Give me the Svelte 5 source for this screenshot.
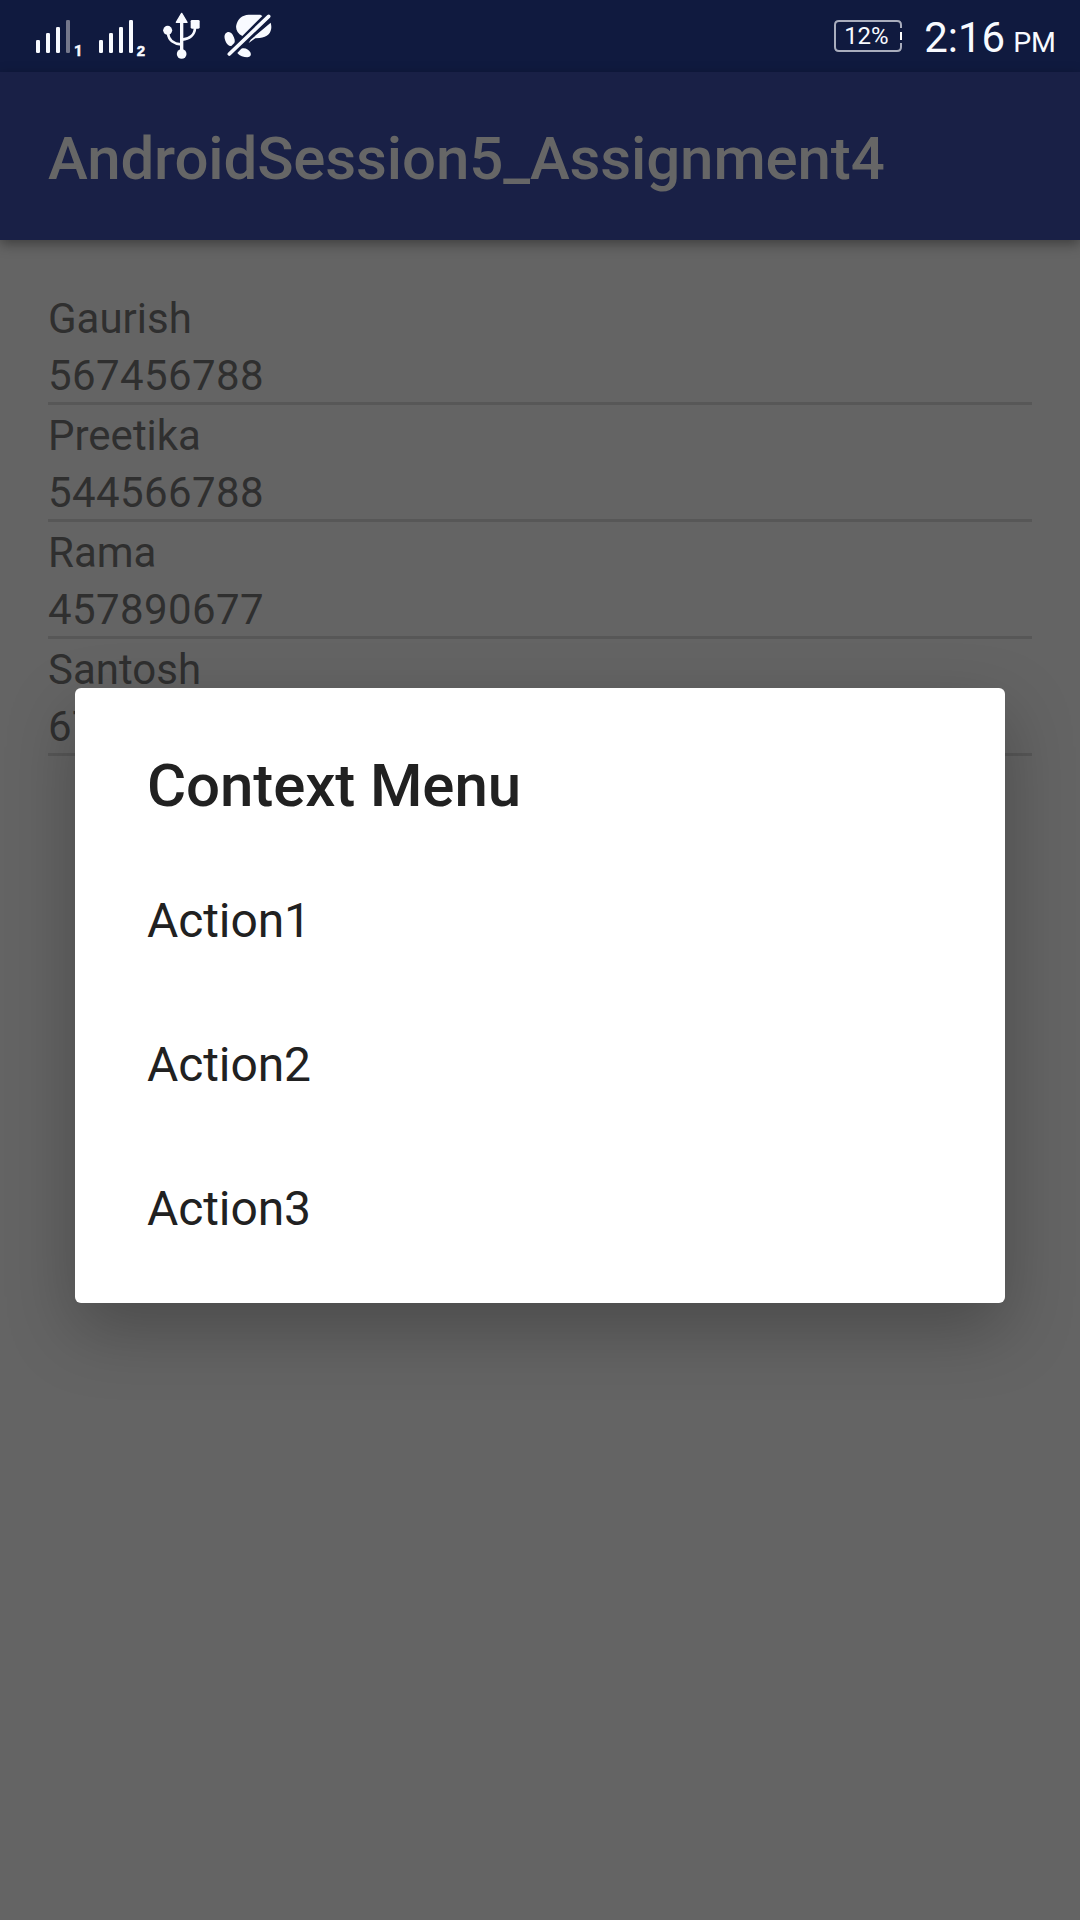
<script>
  const contacts = [
    { name: 'Gaurish', phone: '567456788' },
    { name: 'Preetika', phone: '544566788' },
    { name: 'Rama', phone: '457890677' },
    { name: 'Santosh', phone: '678905678' }
  ];
  const actions = ['Action1', 'Action2', 'Action3'];
</script>

<div class="screen">
  <header class="status">
    <svg class="icons" width="270" height="72" viewBox="0 0 810 216">
      <!-- SIM signal strength -->
      <g fill="#f8faff">
        <rect x="48" y="120" width="12" height="39" rx="4" />
        <rect x="78" y="99" width="12" height="60" rx="4" />
        <rect x="108" y="81" width="12" height="78" rx="4" />
        <rect x="138" y="60" width="12" height="99" rx="4" fill="#74778b" />
        <rect x="237" y="120" width="12" height="39" rx="4" />
        <rect x="267" y="99" width="12" height="60" rx="4" />
        <rect x="297" y="81" width="12" height="78" rx="4" />
        <rect x="327" y="60" width="12" height="99" rx="4" />
        <text class="one" x="162" y="168">1</text>
        <text x="350" y="168">2</text>
      </g>
      <!-- USB -->
      <g transform="translate(390 0)" fill="#f8faff">
        <path d="M95 40 L111 67 H79 Z" stroke="#f8faff" stroke-width="4" stroke-linejoin="round" />
        <rect x="90" y="60" width="10" height="100" />
        <circle cx="95" cy="162" r="14.5" />
        <circle cx="53" cy="91" r="13.5" />
        <rect x="122" y="60" width="27" height="26" rx="4" />
        <path d="M54 100 C56 122 74 132 93 133 M135 84 C134 105 118 118 97 119" fill="none" stroke="#f8faff" stroke-width="8" />
      </g>
      <!-- Muted notifications -->
      <g transform="translate(390 0)" fill="#f8faff">
        <path d="M277 108 C262 101 256 87 259 75 C263 57 276 45 296 44 H331 L337 48 Z" />
        <path d="M362 68 C369 91 358 112 329 114 L316 115 L296 129 L302 119 Z" />
        <path d="M226 101 C233 93 242 95 248 104 C254 114 256 123 253 129 L244 138 C236 139 230 132 226 122 C223 113 222 106 226 101 Z" />
        <path d="M262 159 L274 146 C285 142 296 148 301 157 C305 166 301 171 292 172 C281 172 269 168 262 159 Z" />
        <path d="M238 162 L356 49" fill="none" stroke="#f8faff" stroke-width="11" stroke-linecap="round" />
      </g>
    </svg>
    <div class="right">
      <div class="battery">
        <svg width="69" height="33" viewBox="0 0 69 33" fill="none">
          <path d="M67 8 V5 Q67 1 63 1 H5 Q1 1 1 5 V27 Q1 31 5 31 H63 Q67 31 67 27 V23" stroke="#a9adbd" stroke-width="2" />
          <path d="M67 12 V20" stroke="#fff" stroke-width="2" />
        </svg>
        <span>12%</span>
      </div>
      <div class="clock">2:16<small>PM</small></div>
    </div>
  </header>

  <div class="appbar"><h1>AndroidSession5_Assignment4</h1></div>

  <ul class="list">
    {#each contacts as c}
      <li>
        <p>{c.name}</p>
        <p class="phone">{c.phone}</p>
      </li>
    {/each}
  </ul>

  <div class="dialog" role="dialog">
    <h2>Context Menu</h2>
    {#each actions as a}
      <div class="item">{a}</div>
    {/each}
  </div>
</div>

<style>
  :global(body) {
    margin: 0;
  }
  .screen {
    position: relative;
    width: 1080px;
    height: 1920px;
    overflow: hidden;
    background: #646464;
    font-family: Roboto, 'Liberation Sans', sans-serif;
  }
  .status {
    display: flex;
    justify-content: space-between;
    height: 72px;
    box-sizing: border-box;
    padding: 0 24px 0 20px;
    background: #101a3f;
    color: #f8faff;
  }
  .icons text {
    font: bold 45px 'Liberation Sans', sans-serif;
    stroke: #f8faff;
    stroke-width: 1.5px;
  }
  .icons .one {
    font-family: Roboto, sans-serif;
  }
  .right {
    display: flex;
    gap: 21px;
  }
  .battery {
    display: grid;
    width: 69px;
    height: 33px;
    margin-top: 20px;
  }
  .battery svg,
  .battery span {
    grid-area: 1 / 1;
  }
  .battery span {
    padding-left: 10px;
    font-size: 24px;
    line-height: 33px;
  }
  .clock {
    font-size: 42px;
    line-height: 75px;
    white-space: nowrap;
  }
  .clock small {
    margin-left: 8px;
    font-size: 28.5px;
  }
  .appbar {
    position: relative;
    height: 168px;
    box-sizing: border-box;
    padding-left: 48px;
    background: #192046;
    box-shadow: 0 4px 12px rgba(0, 0, 0, 0.38);
  }
  h1,
  h2,
  p,
  ul {
    margin: 0;
    padding: 0;
  }
  h1 {
    font-size: 60px;
    font-weight: 500;
    line-height: 173px;
    letter-spacing: -0.13px;
    color: #666;
  }
  .list {
    margin: 48px 48px 0;
    list-style: none;
    color: #2f2f2f;
  }
  li {
    border-bottom: 3px solid #575757;
  }
  p {
    padding-top: 4px;
    font-size: 42px;
    line-height: 53px;
  }
  .phone {
    letter-spacing: 0.4px;
  }
  .dialog {
    position: absolute;
    top: 688px;
    left: 75px;
    width: 930px;
    height: 615px;
    box-sizing: border-box;
    padding: 61px 72px 0;
    border-radius: 6px;
    background: #fff;
    color: #212121;
    box-shadow: 0 26px 68px rgba(0, 0, 0, 0.26);
  }
  h2 {
    height: 100px;
    font-size: 60px;
    font-weight: 500;
    line-height: 74px;
    letter-spacing: -0.1px;
  }
  .item {
    height: 144px;
    font-size: 48px;
    line-height: 144px;
    letter-spacing: -0.1px;
  }
</style>
